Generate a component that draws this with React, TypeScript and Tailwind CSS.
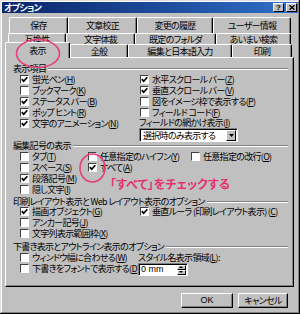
import React from 'react';

function K(props: { c: string }) {
  return <span className="underline underline-offset-1">{props.c}</span>;
}

function Check(props: { on?: boolean; label: React.ReactNode; className?: string }) {
  return (
    <div className={"flex items-center h-[11px] whitespace-nowrap " + (props.className || '')}>
      <span className="w-[9px] h-[9px] shrink-0 bg-white border border-t-[#404040] border-l-[#404040] border-b-white border-r-white flex items-center justify-center">
        {props.on && (
          <svg width="7" height="7" viewBox="0 0 7 7">
            <path d="M0.8 3.2 L2.7 5.2 L6.3 1.2" fill="none" stroke="#000" strokeWidth="1.7" />
          </svg>
        )}
      </span>
      <span className="ml-[3px]">{props.label}</span>
    </div>
  );
}

function Group(props: { title: string; className?: string }) {
  return (
    <div className={"flex items-center ml-[7px] w-[275px] " + (props.className || '')}>
      <span className="whitespace-nowrap">{props.title}</span>
      <div className="flex-1 ml-[2px] h-0 border-t border-b border-t-[#808080] border-b-white" />
    </div>
  );
}

function Tab(props: { label: string; className: string }) {
  return (
    <div
      className={
        'flex justify-center items-center border-t border-l border-r border-t-white border-l-white border-r-black rounded-t-[2px] shadow-[inset_-1px_0_0_#808080] whitespace-nowrap ' +
        props.className
      }
    >
      {props.label}
    </div>
  );
}

export default function App() {
  return (
    <div className="relative w-[300px] h-[314px] bg-[#c0c0c0] text-[9px] leading-[11px] tracking-[-0.7px] text-black font-['Noto_Sans_CJK_JP',sans-serif] [font-feature-settings:'palt'] shadow-[inset_-1px_-1px_0_#000,inset_1px_1px_0_#dfdfdf,inset_-2px_-2px_0_#808080,inset_2px_2px_0_#fff] overflow-hidden">
      {/* title bar */}
      <div className="mx-[2px] mt-[2px] h-[11px] flex items-center bg-linear-to-r from-[#0a246a] to-[#3070c8]">
        <span className="ml-[2px] text-white font-bold">オプション</span>
        <div className="ml-auto mr-[1px] flex gap-[2px]">
          <div className="w-[11px] h-[9px] bg-[#c0c0c0] border-t border-l border-white border-r border-b border-r-black border-b-black flex items-center justify-center text-[8px] leading-[8px] tracking-normal font-bold font-['Liberation_Sans',sans-serif]">
            ?
          </div>
          <div className="w-[11px] h-[9px] bg-[#c0c0c0] border-t border-l border-white border-r border-b border-r-black border-b-black flex items-center justify-center">
            <svg width="6" height="5" viewBox="0 0 6 5">
              <path d="M0.5 0.3 L5.5 4.7 M5.5 0.3 L0.5 4.7" stroke="#000" strokeWidth="1.4" />
            </svg>
          </div>
        </div>
      </div>

      {/* tab rows */}
      <div className="flex mt-[4px] ml-[9px] h-[16px]">
        <Tab label="保存" className="w-[59px] h-[16px]" />
        <Tab label="文章校正" className="w-[69px] h-[16px]" />
        <Tab label="変更の履歴" className="w-[76px] h-[16px]" />
        <Tab label="ユーザー情報" className="w-[78px] h-[16px]" />
      </div>
      <div className="flex ml-[8px] h-[9px]">
        <Tab label="互換性" className="w-[58px] h-[12px] shrink-0" />
        <Tab label="文字体裁" className="w-[69px] h-[12px] shrink-0" />
        <Tab label="既定のフォルダ" className="w-[81px] h-[12px] shrink-0" />
        <Tab label="あいまい検索" className="w-[75px] h-[12px] shrink-0" />
      </div>
      <div className="flex items-end ml-[5px] h-[15px]">
        <Tab label="表示" className="relative z-10 w-[65px] h-[16px] -mb-px bg-[#c0c0c0]" />
        <Tab label="全般" className="relative w-[58px] h-[13px] bg-[#c0c0c0]" />
        <Tab label="編集と日本語入力" className="relative w-[104px] h-[13px] bg-[#c0c0c0]" />
        <Tab label="印刷" className="relative w-[60px] h-[13px] bg-[#c0c0c0]" />
      </div>

      {/* panel */}
      <div className="relative ml-[5px] w-[289px] h-[230px] border border-t-white border-l-white border-r-black border-b-black shadow-[inset_-1px_-1px_0_#808080] pt-[6px]">
        <Group title="表示項目" className="h-[10px] leading-[10px]" />
        <div className="flex">
          <div className="ml-[14px] w-[120px] flex flex-col">
            <Check on label={<>蛍光ペン(<K c="H" />)</>} />
            <Check label={<>ブックマーク(<K c="K" />)</>} />
            <Check on label={<>ステータス バー(<K c="B" />)</>} />
            <Check on label={<>ポップ ヒント(<K c="R" />)</>} />
            <Check on label={<>文字のアニメーション(<K c="N" />)</>} />
          </div>
          <div className="flex flex-col">
            <Check on label={<>水平スクロール バー(<K c="Z" />)</>} />
            <Check on label={<>垂直スクロール バー(<K c="V" />)</>} />
            <Check label={<>図をイメージ枠で表示する(<K c="P" />)</>} />
            <Check label={<>フィールド コード(<K c="F" />)</>} />
            <div className="-ml-px h-[10px] leading-[10px] whitespace-nowrap">
              フィールドの網かけ表示(<K c="I" />)
            </div>
            <div className="-ml-px w-[99px] h-[14px] bg-white border border-t-[#808080] border-l-[#808080] border-b-white border-r-white shadow-[inset_1px_1px_0_#000] flex items-center">
              <span className="ml-[3px] whitespace-nowrap">選択時のみ表示する</span>
              <div className="ml-auto mr-px w-[10px] h-[11px] bg-[#c0c0c0] border-t border-l border-t-white border-l-white border-r border-b border-r-black border-b-black flex items-center justify-center">
                <svg width="5" height="3" viewBox="0 0 5 3">
                  <path d="M0 0 H5 L2.5 3 Z" fill="#000" />
                </svg>
              </div>
            </div>
          </div>
        </div>

        <Group title="編集記号の表示" className="h-[11px] -mt-[2px]" />
        <div className="flex">
          <div className="ml-[14px] w-[68px] flex flex-col">
            <Check label={<>タブ(<K c="T" />)</>} />
            <Check label={<>スペース(<K c="S" />)</>} />
            <Check on label={<>段落記号(<K c="M" />)</>} />
            <Check label={<>隠し文字(<K c="I" />)</>} />
          </div>
          <div className="w-[103px] flex flex-col">
            <Check label={<>任意指定のハイフン(<K c="Y" />)</>} />
            <Check on label={<>すべて(<K c="A" />)</>} />
          </div>
          <div className="flex flex-col">
            <Check label={<>任意指定の改行(<K c="O" />)</>} />
          </div>
        </div>

        <Group title="印刷レイアウト表示と Web レイアウト表示のオプション" className="h-[9px] leading-[9px] mt-[2px]" />
        <div className="flex">
          <div className="ml-[14px] w-[120px] flex flex-col">
            <Check on label={<>描画オブジェクト(<K c="G" />)</>} />
            <Check label={<>アンカー記号(<K c="J" />)</>} />
            <Check label={<>文字列表示範囲枠(<K c="X" />)</>} />
          </div>
          <div className="flex flex-col">
            <Check on label={<>垂直ルーラ (印刷レイアウト表示) (<K c="C" />)</>} />
          </div>
        </div>

        <Group title="下書き表示とアウトライン表示のオプション" className="h-[10px] leading-[10px] mt-[3px]" />
        <div className="flex">
          <div className="ml-[14px] w-[118px] flex flex-col">
            <Check label={<>ウィンドウ幅に合わせる(<K c="W" />)</>} />
            <Check label={<>下書きをフォントで表示する(<K c="D" />)</>} />
          </div>
          <div className="flex flex-col">
            <div className="h-[11px] whitespace-nowrap">
              スタイル名表示領域(<K c="L" />):
            </div>
            <div className="w-[50px] h-[13px] bg-white border border-t-[#808080] border-l-[#808080] border-b-white border-r-white shadow-[inset_1px_1px_0_#000] flex items-center">
              <span className="ml-[2px] whitespace-nowrap tracking-normal font-['Liberation_Sans',sans-serif]">0 mm</span>
              <div className="ml-auto mr-px flex flex-col">
                <div className="w-[9px] h-[5px] bg-[#c0c0c0] border-t border-l border-t-white border-l-white border-r border-b border-r-black border-b-black flex items-center justify-center">
                  <svg width="5" height="2" viewBox="0 0 5 2">
                    <path d="M0 2 H4 L2 0 Z" fill="#000" />
                  </svg>
                </div>
                <div className="w-[9px] h-[5px] bg-[#c0c0c0] border-t border-l border-t-white border-l-white border-r border-b border-r-black border-b-black flex items-center justify-center">
                  <svg width="5" height="2" viewBox="0 0 5 2">
                    <path d="M0 0 H4 L2 2 Z" fill="#000" />
                  </svg>
                </div>
              </div>
            </div>
          </div>
        </div>
      </div>

      {/* buttons */}
      <div className="flex mt-[6px]">
        <button className="ml-[181px] w-[52px] h-[15px] bg-[#c0c0c0] border border-t-white border-l-white border-r-black border-b-black shadow-[inset_-1px_-1px_0_#808080] font-['Liberation_Sans',sans-serif] tracking-normal text-[9px] leading-[11px]">
          OK
        </button>
        <button className="ml-[5px] w-[50px] h-[15px] bg-[#c0c0c0] border border-t-white border-l-white border-r-black border-b-black shadow-[inset_-1px_-1px_0_#808080] text-[9px] leading-[11px]">
          キャンセル
        </button>
      </div>

      {/* annotations */}
      <svg className="absolute left-[15px] top-[38px] z-20" width="46" height="31" viewBox="0 0 46 31">
        <ellipse cx="23" cy="15.5" rx="21.5" ry="14" fill="none" stroke="#e4407c" strokeWidth="1.6" />
      </svg>
      <svg className="absolute left-[78px] top-[152px] z-20" width="29" height="32" viewBox="0 0 29 32">
        <ellipse cx="14.5" cy="16" rx="12.5" ry="14" fill="none" stroke="#e4407c" strokeWidth="1.6" />
      </svg>
      <div className="absolute z-20 left-[110px] top-[176px] text-[12px] leading-[15px] tracking-normal font-bold text-[#e6306e] whitespace-nowrap">
        「すべて」をチェックする
      </div>
    </div>
  );
}
